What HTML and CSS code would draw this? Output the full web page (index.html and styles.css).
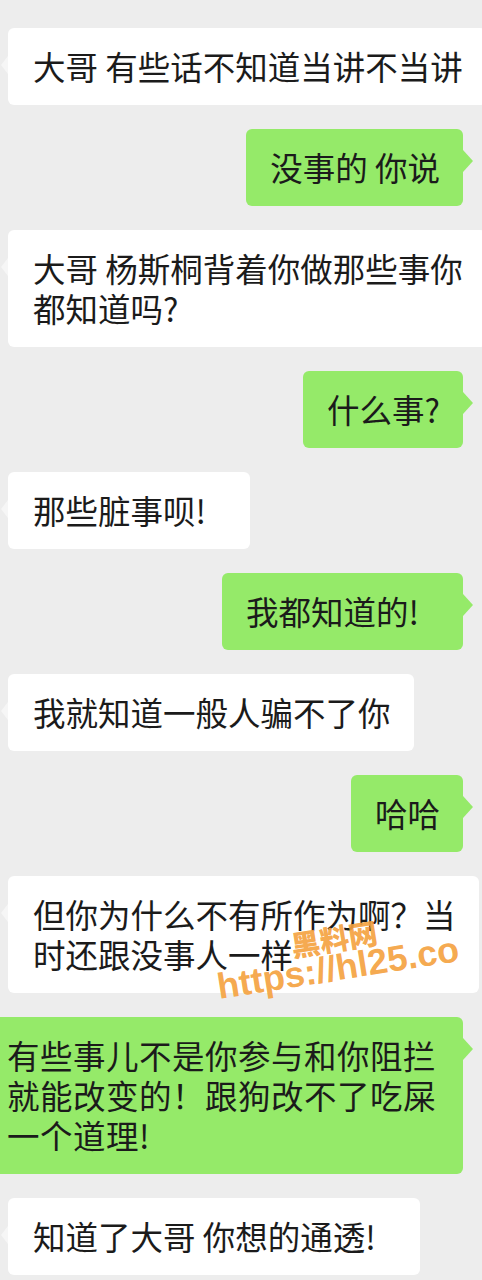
FILE: index.html
```html
<!DOCTYPE html>
<html lang="zh-CN">
<head>
<meta charset="utf-8">
<title>聊天记录</title>
<link rel="stylesheet" href="styles.css">
</head>
<body>
<div class="chat">
  <div class="row left"><div class="bubble white">大哥 有些话不知道当讲不当讲</div></div>
  <div class="row right"><div class="bubble green">没事的 你说</div></div>
  <div class="row left"><div class="bubble white">大哥 杨斯桐背着你做那些事你<br>都知道吗?</div></div>
  <div class="row right"><div class="bubble green">什么事?</div></div>
  <div class="row left"><div class="bubble white bang">那些脏事呗!</div></div>
  <div class="row right"><div class="bubble green bang">我都知道的!</div></div>
  <div class="row left"><div class="bubble white">我就知道一般人骗不了你</div></div>
  <div class="row right"><div class="bubble green">哈哈</div></div>
  <div class="row left"><div class="bubble white">但你为什么不有所作为啊？当<br>时还跟没事人一样</div></div>
  <div class="row right flush-row"><div class="bubble green flush">有些事儿不是你参与和你阻拦<br>就能改变的！跟狗改不了吃屎<br>一个道理!</div></div>
  <div class="row left"><div class="bubble white bang">知道了大哥 你想的通透!</div></div>
</div>
<div class="wm wm-cn">黑料网</div>
<div class="wm wm-url">https://hl25.co</div>
</body>
</html>
```

FILE: styles.css
```css
html, body {
  margin: 0;
  padding: 0;
  overflow-x: hidden;
}
body {
  background: #ededed;
  font-family: "Noto Sans CJK SC", "Noto Sans", sans-serif;
  color: #1b1b1b;
  width: 482px;
  height: 1280px;
  position: relative;
}
.chat {
  display: flex;
  flex-direction: column;
  gap: 24px;
  padding-top: 28px;
}
.row {
  display: flex;
}
.row.left {
  justify-content: flex-start;
  padding-left: 8px;
}
.row.right {
  justify-content: flex-end;
  padding-right: 19px;
}
.bubble {
  position: relative;
  font-size: 32.5px;
  line-height: 40px;
  padding: 18px 23px 19px 25px;
  border-radius: 6px;
  white-space: nowrap;
  flex: none;
}
.bubble.white {
  background: #ffffff;
}
.bubble.green {
  background: #95ea69;
  padding-left: 24px;
}
.bubble.bang {
  padding-right: 44px;
}
.bubble.green.flush {
  box-sizing: border-box;
  width: 463px;
  padding-left: 7px;
  padding-right: 20px;
  letter-spacing: 0.5px;
  border-radius: 0 6px 6px 0;
}
.bubble.white::before {
  content: "";
  position: absolute;
  left: -7px;
  top: 28px;
  border-top: 9px solid transparent;
  border-bottom: 9px solid transparent;
  border-right: 7px solid #f6f6f6;
}
.bubble.green::after {
  content: "";
  position: absolute;
  right: -10px;
  top: 21px;
  border-top: 11px solid transparent;
  border-bottom: 11px solid transparent;
  border-left: 10px solid #95ea69;
}
.wm {
  position: absolute;
  white-space: nowrap;
  color: rgba(245, 162, 64, 0.93);
  font-weight: bold;
  pointer-events: none;
  transform: translate(-50%, -50%) rotate(-9deg);
}
.wm-cn {
  left: 334px;
  top: 938px;
  font-family: "Noto Sans CJK SC", sans-serif;
  font-size: 29px;
  line-height: 29px;
  font-weight: 900;
}
.wm-url {
  left: 338px;
  top: 968px;
  font-family: "Liberation Sans", Arial, sans-serif;
  font-size: 36px;
  line-height: 36px;
  font-weight: bold;
}
```
